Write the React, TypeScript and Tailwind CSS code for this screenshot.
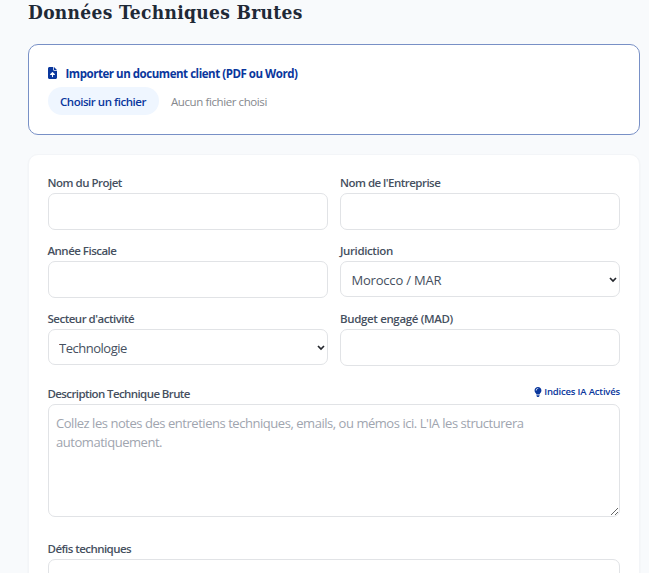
import type { ReactNode } from "react";

const labelClass = "block h-[18px] whitespace-nowrap text-[11.5px] font-semibold leading-[18px] text-[#465060]";
const fieldClass = "block w-full rounded-[7px] border border-[#e1e3e6] bg-white";

function Field({ label, spacing, children }: { label: string; spacing: string; children: ReactNode }) {
  return (
    <div className="h-[68px] min-w-0">
      <label className={`${labelClass} ${spacing}`}>{label}</label>
      <div className="mt-px">{children}</div>
    </div>
  );
}

function Select({ value, spacing }: { value: string; spacing: string }) {
  return (
    <div className="relative">
      <select className={`${fieldClass} h-[36px] appearance-none pl-[10.5px] pt-[3px] text-[13px] text-[#465060] ${spacing}`}>
        <option>{value}</option>
      </select>
      <svg className="pointer-events-none absolute right-[3px] top-[16px] h-[6px] w-[8px]" viewBox="0 0 8 6" fill="none" stroke="#24272d" strokeWidth="1.7">
        <path d="M1 1l3 3 3-3" />
      </svg>
    </div>
  );
}

function FileUpIcon() {
  return (
    <svg className="h-[12px] w-[9px]" viewBox="0 0 384 512" fill="#0a379d">
      <path d="M64 0C29 0 0 29 0 64v384c0 35 29 64 64 64h256c35 0 64-29 64-64V160H256c-18 0-32-14-32-32V0H64zm192 0v128h128L256 0zM216 408c0 13-11 24-24 24s-24-11-24-24V344h-56c-13 0-24-11-24-24 0-7 3-13 8-18l79-78c9-9 25-9 34 0l79 78c5 5 8 11 8 18 0 13-11 24-24 24h-56v64z" />
    </svg>
  );
}

function BulbIcon() {
  return (
    <svg className="h-[10px] w-[8px]" viewBox="0 0 384 512" fill="#0a379d">
      <path fillRule="evenodd" d="M272 384c10-32 29-58 49-85 5-7 10-14 15-22 20-28 31-63 31-100C367 79 289 0 192 0S16 79 16 176c0 37 12 72 31 100 5 8 10 15 15 22 20 27 40 53 49 86h161zm-80 128c44 0 80-36 80-80v-16H112v16c0 44 36 80 80 80zM112 176c0 9-7 16-16 16s-16-7-16-16c0-62 50-112 112-112 9 0 16 7 16 16s-7 16-16 16c-44 0-80 36-80 80z" />
    </svg>
  );
}

export default function App() {
  return (
    <main className="h-[573px] overflow-hidden bg-[#f8fafc] pl-[28px] pr-[9.5px] font-['Open_Sans','Noto_Sans',sans-serif]">
      <h1 className="flex h-[44px] items-start whitespace-nowrap font-['DejaVu_Serif_Condensed','DejaVu_Serif',serif] text-[19px] font-bold leading-[25px] tracking-[0.32px] text-[#1f2937]">
        Données Techniques Brutes
      </h1>

      <section className="h-[91px] rounded-[10px] border border-[#7890c6] bg-white pl-[18.5px] pt-[19px]">
        <div className="flex h-[18px] items-center whitespace-nowrap text-[11.5px] font-bold tracking-[-0.46px] text-[#0a379d]">
          <FileUpIcon />
          <span className="ml-[9px] pt-px">Importer un document client (PDF ou Word)</span>
        </div>
        <div className="mt-[5px] flex h-[28px] items-center whitespace-nowrap text-[11.5px]">
          <button className="h-[28px] w-[111px] rounded-full bg-[#eff6ff] pt-px font-semibold tracking-[-0.47px] text-[#0a379d]">
            Choisir un fichier
          </button>
          <span className="ml-[12.5px] pt-px tracking-[-0.41px] text-[#85888d]">Aucun fichier choisi</span>
        </div>
      </section>

      <section className="mt-[19px] h-[480px] rounded-[10px] border border-[#f3f5f8] bg-white px-[18.5px] pt-[19px] shadow-xs">
        <div className="grid grid-cols-2 gap-x-[12.5px]">
          <Field label="Nom du Projet" spacing="tracking-[-0.5px]"><input className={`${fieldClass} h-[37px]`} /></Field>
          <Field label="Nom de l'Entreprise" spacing="tracking-[-0.52px]"><input className={`${fieldClass} h-[37px]`} /></Field>
          <Field label="Année Fiscale" spacing="tracking-[-0.52px]"><input className={`${fieldClass} h-[37px]`} /></Field>
          <Field label="Juridiction" spacing="tracking-[-0.38px]"><Select value="Morocco / MAR" spacing="tracking-[-0.2px]" /></Field>
          <Field label="Secteur d'activité" spacing="tracking-[-0.5px]"><Select value="Technologie" spacing="tracking-[-0.48px]" /></Field>
          <Field label="Budget engagé (MAD)" spacing="tracking-[-0.35px]"><input className={`${fieldClass} h-[37px]`} /></Field>
        </div>

        <div className="mt-[5px] flex h-[20px] items-start justify-between">
          <label className={`${labelClass} pt-[2px] tracking-[-0.6px]`}>Description Technique Brute</label>
          <span className="flex h-[16px] items-center gap-[2px] whitespace-nowrap pt-px text-[9.5px] font-semibold tracking-[-0.18px] text-[#0a379d]">
            <BulbIcon />
            <span className="pt-px">Indices IA Activés</span>
          </span>
        </div>
        <textarea
          className={`${fieldClass} mt-px h-[113px] px-[7.5px] py-[9px] text-[13px] leading-[19px] tracking-[-0.46px] placeholder:text-[#a0a5af]`}
          placeholder="Collez les notes des entretiens techniques, emails, ou mémos ici. L'IA les structurera automatiquement."
        />
        <label className={`${labelClass} mt-[23px] tracking-[-0.55px]`}>Défis techniques</label>
        <textarea className={`${fieldClass} mt-px h-[90px]`} />
      </section>
    </main>
  );
}
